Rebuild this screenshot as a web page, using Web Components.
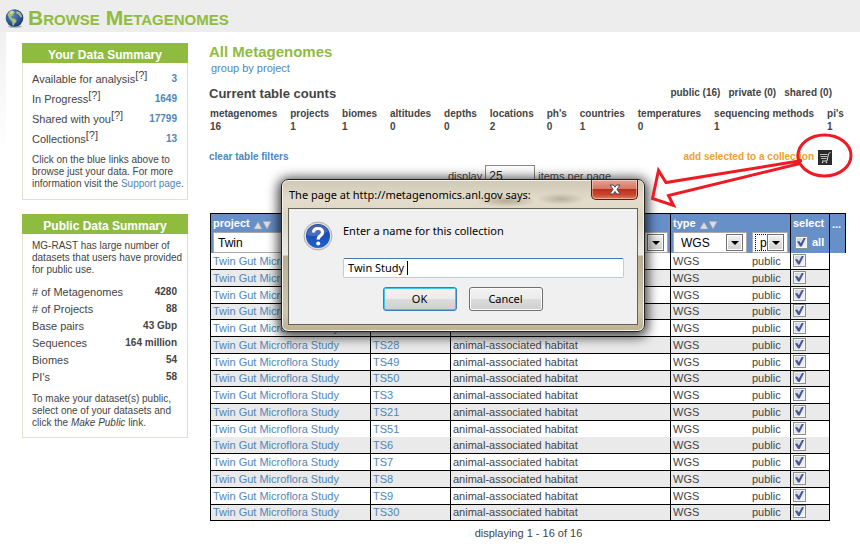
<!DOCTYPE html>
<html lang="en">
<head>
<meta charset="utf-8">
<title>Browse Metagenomes</title>
<style>
html { background: #fff; }
body { margin: 0; font: 11px/14px "Liberation Sans", Arial, sans-serif; color: #444; }
</style>
</head>
<body>
<metagenome-page></metagenome-page>
<script>
const define = (name, html, setup) => {
  const template = document.createElement('template');
  template.innerHTML = html;
  customElements.define(name, class extends HTMLElement {
    constructor() {
      super();
      this.attachShadow({ mode: 'open' }).append(template.content.cloneNode(true));
    }
    connectedCallback() { if (setup) setup(this, this.shadowRoot); }
  });
};

define('page-title', `
<style>
:host { display: flex; align-items: center; gap: 4px; height: 32px; padding: 4px 5px 0; box-sizing: border-box; background: #ededed; }
h1 { margin: 0; font-size: 21px; line-height: 26px; font-variant: small-caps; color: #8fbc3f; }
svg { flex: none; }
</style>
<svg width="19" height="19" viewBox="0 0 19 19" aria-hidden="true">
  <defs><radialGradient id="g" cx=".4" cy=".35" r=".7"><stop offset="0" stop-color="#5c86bd"/><stop offset=".6" stop-color="#2f5a9c"/><stop offset="1" stop-color="#1b3768"/></radialGradient></defs>
  <ellipse cx="10" cy="17.5" rx="7" ry="1.3" fill="#aaa"/>
  <circle cx="9.5" cy="9" r="8.800" fill="url(#g)"/>
  <path d="M2.500 6 4 3 6.500 1.500 9 2l1 1.500-1.500 1.500L7.500 7 6 7.800l1 1.400 2.500.3 2 1.700-.3 2-1.700 1.300-.8 2.300-1.200-.6-.4-3.200-1.600-2L4 8.700z" fill="#a9bf78"/>
  <path d="M11.500 2l3 1.200 2 2.600.6 2.700-1.800-.6-1.600-2.200-2.400-1.200z" fill="#a9bf78"/>
  <path d="M6 2.200 8.500 2 7.500 4 5 5z" fill="#dce5bd"/>
</svg>
<h1><slot></slot></h1>`);

define('summary-card', `
<style>
:host { display: block; }
h2 { margin: 0; height: 20px; font-size: 12px; line-height: 24px; text-align: center; color: #fff; background: #8fbc3f; overflow: hidden; }
.body { border: 1px solid #dfe2cf; border-top: 0; padding: 6px 10px 8px 9px; }
</style>
<h2><slot name="heading"></slot></h2>
<div class="body"><slot></slot></div>`);

define('summary-row', `
<style>
:host { display: flex; justify-content: space-between; align-items: center; height: var(--row-height, 17px); }
.value { font-weight: bold; font-size: 10px; }
a { color: #4f86b8; text-decoration: none; }
sup { font-size: 11px; line-height: 0; vertical-align: 4px; }
</style>
<span class="label"><span id="name"></span><sup id="hint"></sup></span><span class="value"></span>`,
(el, root) => {
  root.querySelector('#name').textContent = el.getAttribute('label');
  const value = root.querySelector('.value');
  if (el.hasAttribute('linked')) {
    root.querySelector('#hint').textContent = '[?]';
    const a = document.createElement('a');
    a.href = '#';
    a.textContent = el.getAttribute('value');
    value.replaceChildren(a);
  } else {
    root.querySelector('#hint').remove();
    value.textContent = el.getAttribute('value');
  }
});

define('count-strip', `
<style>
:host { display: block; }
dl { display: flex; justify-content: space-between; margin: 0; font-weight: bold; font-size: 10px; line-height: 13px; }
dd { margin: 0; }
</style><dl></dl>`,
(el, root) => {
  const counts = [['metagenomes', 16], ['projects', 1], ['biomes', 1], ['altitudes', 0], ['depths', 0], ['locations', 2], ["ph's", 0], ['countries', 1], ['temperatures', 0], ['sequencing methods', 1], ["pi's", 1]];
  root.querySelector('dl').innerHTML = counts.map(([k, v]) => `<div><dt>${k}</dt><dd>${v}</dd></div>`).join('');
});

define('sort-arrows', `
<style>:host { display: inline-block; vertical-align: -3px; } svg { display: block; }</style>
<svg width="19" height="10" viewBox="0 0 19 10" aria-hidden="true"><path d="M1 9 5 2l4 7z" fill="#ddd" stroke="#aaa" stroke-width=".6"/><path d="M10 1.500h8L14 9z" fill="#ddd" stroke="#aaa" stroke-width=".6"/></svg>`);

define('filter-select', `
<style>
:host { display: grid; height: 21px; }
select, .arrow { grid-area: 1 / 1; }
select { appearance: none; width: 100%; min-width: 0; height: 21px; margin: 0; padding: 0 20px 0 7px; border: 1px solid #aaa; border-radius: 0; background: #fff; color: #000; font: 12px "Liberation Sans", Arial, sans-serif; }
.arrow { justify-self: end; align-self: center; width: 15px; height: 15px; margin-right: 4px; border: 1px solid #707070; box-shadow: inset 0 0 0 1px #fff; background: linear-gradient(#f3f3f3, #cfcfcf); pointer-events: none; display: grid; place-items: center; }
.arrow::before { content: ""; border: 4px solid transparent; border-top-color: #000; border-bottom: 0; }
.ring { grid-area: 1 / 1; display: none; width: 11px; height: 15px; margin: 2px 0 0 3px; border: 1px dotted #000; pointer-events: none; }
:host([focused]) .ring { display: block; }
</style>
<select><option></option></select><span class="ring"></span><span class="arrow"></span>`,
(el, root) => {
  root.querySelector('option').textContent = el.getAttribute('value') || '';
  root.querySelector('select').setAttribute('aria-label', el.getAttribute('label'));
});

define('metagenome-table', `
<style>
:host { display: block; }
table { width: 100%; table-layout: fixed; border-collapse: separate; border-spacing: 0; border-top: 1px solid #000; line-height: 14px; }
th { box-sizing: border-box; height: 39px; padding: 3px 2px 0; text-align: left; vertical-align: top; color: #fff; background: #678fc8; border-left: 1px solid #000; }
th:last-child { border-right: 1px solid #000; }
th.join, td.join { border-left: 0; padding-left: 3px; }
.label { display: block; height: 15px; line-height: 13px; white-space: nowrap; }
.text { display: block; box-sizing: border-box; width: 100%; height: 21px; margin: 0; padding: 0 4px; border: 1px solid #aaa; background: #fff; font: 12px "Liberation Sans", Arial, sans-serif; color: #000; }
td { box-sizing: border-box; height: 17px; padding: 0 2px; border-left: 1px solid #000; border-bottom: 1px solid #000; white-space: nowrap; line-height: 15px; }
tr:nth-child(4n) td { height: 16px; }
tr:nth-child(11) td { border-bottom-color: #eaeaea; }
tr:nth-child(even) td { background: #eaeaea; }
tbody td.rest { background: none; border-bottom: 0; }
td a { color: #4f86b8; text-decoration: none; }
input[type=checkbox] { appearance: none; display: inline-block; box-sizing: border-box; width: 13px; height: 13px; margin: 0; border: 1px solid #8e8f8f; background: linear-gradient(135deg, #c8ccd2, #fafafa); box-shadow: inset 0 0 0 1px #f4f4f4; vertical-align: top; }
input[type=checkbox]:checked::before { content: ""; display: block; width: 9px; height: 9px; margin: 1px; background: #43579c; clip-path: polygon(0 44%, 25% 40%, 42% 64%, 78% 0, 100% 0, 52% 100%, 34% 100%); }
.all { display: flex; align-items: center; gap: 4px; padding: 3px 0 0 2px; }
</style>
<table>
<colgroup><col style="width:160px"><col style="width:80px"><col><col style="width:79px"><col style="width:41px"><col style="width:39px"><col style="width:17px"></colgroup>
<thead><tr>
<th><span class="label">project <sort-arrows></sort-arrows></span><input class="text" value="Twin" aria-label="project"></th>
<th><span class="label"></span><input class="text" aria-label="metagenome"></th>
<th><span class="label"></span><filter-select label="biome"></filter-select></th>
<th><span class="label">type <sort-arrows></sort-arrows></span><filter-select label="type" value="WGS"></filter-select></th>
<th class="join"><span class="label"></span><filter-select focused label="access" value="p"></filter-select></th>
<th><span class="label">select</span><label class="all"><input type="checkbox" checked>all</label></th>
<th>...</th>
</tr></thead><tbody></tbody>
</table>`,
(el, root) => {
  const names = ['', '', '', '', '', 'TS28', 'TS49', 'TS50', 'TS3', 'TS21', 'TS51', 'TS6', 'TS7', 'TS8', 'TS9', 'TS30'];
  root.querySelector('tbody').innerHTML = names.map((n, i) => `<tr><td><a href="#">Twin Gut Microflora Study</a></td><td>${n ? `<a href="#">${n}</a>` : ''}</td><td>${n ? 'animal-associated habitat' : ''}</td><td>WGS</td><td class="join">public</td><td><input type="checkbox" checked aria-label="select row ${i + 1}"></td><td class="rest"></td></tr>`).join('');
});

define('prompt-dialog', `
<style>
:host { display: block; box-sizing: border-box; width: 364px; border: 1px solid #222; border-radius: 7px; padding: 0 6px 6px; color: #000;
  font: 11px/16px "Noto Sans", sans-serif;
  background: radial-gradient(ellipse 30px 6px at 62% 21px, #b5ab93 0, transparent 100%), radial-gradient(ellipse 24px 6px at 77% 19px, #b9b09b 0, transparent 100%), linear-gradient(#cfc8b5, #e3dccb 20px, #dcd5c3 40px, #eceae4 75px, #b9ae94 76px, #cfc6b0 130px, #bdb193);
  box-shadow: inset 0 0 0 1px #f5f2ea, 0 2px 12px 3px rgba(0,0,0,.75); }
header { display: flex; justify-content: space-between; height: 28px; }
h2 { margin: 0; padding: 0 0 0 1px; font-size: 11px; font-weight: normal; line-height: 29px; }
.close { display: grid; place-items: center; width: 47px; height: 20px; padding: 0; border: 1px solid #5b1b14; border-top: 0; border-radius: 0 0 5px 5px; background: linear-gradient(#e7a394, #d67864 45%, #b8301c 50%, #cc4b2f 80%, #e08263); box-shadow: inset 0 0 0 1px rgba(255,255,255,.4); }
form { display: grid; grid-template-columns: 30px 1fr; column-gap: 10px; box-sizing: border-box; height: 117px; padding: 12px 14px; border: 1px solid #666255; background: #f0f0f0; }
label { padding-top: 2px; }
input { grid-column: 2; box-sizing: border-box; width: 281px; height: 20px; margin: 6px 0 9px; padding: 0 4px; border: 1px solid #b5cfe7; border-top-color: #3d7bad; border-radius: 2px; outline: 0; background: linear-gradient(#000, #000) 63px 2px / 1px 14px no-repeat #fff; color: #000; font: inherit; }
.buttons { grid-column: 1 / 3; display: flex; justify-content: center; gap: 12px; padding-right: 2px; }
.buttons button { width: 74px; height: 24px; padding: 0; border: 1px solid #707070; border-radius: 3px; background: linear-gradient(#f3f3f3, #ebebeb 50%, #dcdcdc 51%, #cfcfcf); box-shadow: inset 0 0 0 1px #fbfbfb; color: #000; font: inherit; }
.buttons .ok { border-color: #3c7fb1; box-shadow: inset 0 0 0 1px #3fc8ef; }
</style>
<header><h2>The page at http://metagenomics.anl.gov says:</h2>
<button class="close" aria-label="Close"><svg width="12" height="11" viewBox="0 0 12 11"><path d="M1 1h3.300L6 3.200 7.700 1H11L8 5.300 11.200 10H7.800L6 7.500 4.200 10H.8L4 5.300z" fill="#fff" stroke="#49484e"/></svg></button></header>
<form onsubmit="return false">
<svg width="30" height="30" viewBox="0 0 30 30" aria-hidden="true"><defs><linearGradient id="b" x2="0" y2="1"><stop stop-color="#153d92"/><stop offset=".5" stop-color="#1d4fb4"/><stop offset="1" stop-color="#1e62d2"/></linearGradient></defs><circle cx="15" cy="15" r="14" fill="#ddd" stroke="#b0b0b0"/><circle cx="15" cy="15" r="12" fill="url(#b)"/><path d="M4 14A11 11 0 0 1 25 10Q17 17 4 14z" fill="#fff" opacity=".2"/><path d="M10.500 11.500Q10.500 7.500 15 7.500T19.500 11.500Q19.500 13.600 17.300 14.800 15.200 16 15.200 18.500" fill="none" stroke="#fff" stroke-width="3.200"/><circle cx="15.200" cy="22.500" r="2" fill="#fff"/></svg>
<label for="name">Enter a name for this collection</label>
<input id="name" value="Twin Study">
<div class="buttons"><button class="ok">OK</button><button type="button">Cancel</button></div>
</form>`);

define('callout-arrow', `
<style>:host { display: block; pointer-events: none; } svg { display: block; }</style>
<svg width="210" height="80" viewBox="646 130 210 80" fill="none" stroke="#ed1c24" stroke-width="3" aria-hidden="true"><ellipse cx="824.500" cy="155.500" rx="26.500" ry="20.500"/><path d="M802 160.500 666 182.500 658.500 170.500 652.500 198.500 673.500 205.500 668.500 195.500 800 163.500"/></svg>`);

define('metagenome-page', `
<style>
:host { display: block; position: relative; background: linear-gradient(#ededed, #fff 150px); }
.sheet { display: grid; grid-template-columns: 166px 1fr; column-gap: 21px; margin-left: 6px; padding: 11px 14px 8px 16px; background: #fff; }
aside { display: flex; flex-direction: column; gap: 14px; }
p { margin: 0 -8px 0 0; font-size: 10px; line-height: 12px; }
a { color: #4f86b8; text-decoration: none; }
.mine { --row-height: 20px; }
.mine p { padding: 5px 0 1px; }
.first { padding-bottom: 7px; }
.last { padding: 8px 0 0; }
.all-h { margin: 0; font-size: 15px; line-height: 18px; color: #8fbc3f; }
.group { display: block; padding-left: 2px; line-height: 15px; }
.heads { display: flex; justify-content: space-between; align-items: flex-end; height: 25px; }
.cur { margin: 0; font-size: 13px; line-height: 15px; }
.access { display: flex; gap: 8px; padding-right: 14px; font-size: 10px; font-weight: bold; line-height: 16px; }
count-strip { margin: 6px 2px 0 1px; }
.tools { display: flex; justify-content: space-between; align-items: center; height: 16px; margin-top: 16px; padding-right: 14px; font-size: 10px; font-weight: bold; }
.add { display: flex; align-items: center; gap: 4px; color: #f0a030; }
.pager { display: flex; justify-content: center; align-items: center; gap: 3px; margin: 0 0 27px; padding-left: 4px; height: 21px; }
.pager input { box-sizing: border-box; width: 50px; height: 21px; padding: 0 3px; border: 1px solid #888; font: 12px "Liberation Sans", Arial, sans-serif; color: #222; }
metagenome-table { margin: 0 0 0 1px; }
.shown { padding: 5px 0 0 2px; text-align: center; }
prompt-dialog { position: absolute; left: 281px; top: 179px; }
callout-arrow { position: absolute; left: 646px; top: 130px; }
</style>
<page-title>Browse Metagenomes</page-title>
<div class="sheet">
<aside>
<summary-card class="mine"><span slot="heading">Your Data Summary</span>
<summary-row linked label="Available for analysis" value="3"></summary-row>
<summary-row linked label="In Progress" value="1649"></summary-row>
<summary-row linked label="Shared with you" value="17799"></summary-row>
<summary-row linked label="Collections" value="13"></summary-row>
<p>Click on the blue links above to browse just your data. For more information visit the <a href="#">Support page</a>.</p></summary-card>
<summary-card><span slot="heading">Public Data Summary</span>
<p class="first">MG-RAST has large number of datasets that users have provided for public use.</p>
<summary-row label="# of Metagenomes" value="4280"></summary-row>
<summary-row label="# of Projects" value="88"></summary-row>
<summary-row label="Base pairs" value="43 Gbp"></summary-row>
<summary-row label="Sequences" value="164 million"></summary-row>
<summary-row label="Biomes" value="54"></summary-row>
<summary-row label="PI's" value="58"></summary-row>
<p class="last">To make your dataset(s) public, select one of your datasets and click the <i>Make Public</i> link.</p></summary-card>
</aside>
<main>
<h2 class="all-h">All Metagenomes</h2>
<a class="group" href="#">group by project</a>
<div class="heads"><h3 class="cur">Current table counts</h3><div class="access"><span>public (16)</span><span>private (0)</span><span>shared (0)</span></div></div>
<count-strip></count-strip>
<div class="tools"><a href="#">clear table filters</a><a class="add" href="#">add selected to a collection <svg width="14" height="15" viewBox="0 0 14 15" aria-hidden="true"><path d="M0 0h14v15H0z" fill="#2b2b2b"/><path d="M12.500 2 10.500 4 9 11H4" fill="none" stroke="#ddd"/><path d="M2 4.500h7.500M2.500 6.500h6.500M3 8.500h5.500" fill="none" stroke="#bbb"/><circle cx="4.500" cy="12.500" r=".8" fill="#ddd"/><circle cx="8.500" cy="12.500" r=".8" fill="#ddd"/></svg></a></div>
<div class="pager"><label for="size">display</label><input id="size" value="25"><span>items per page</span></div>
<metagenome-table></metagenome-table>
<div class="shown">displaying 1 - 16 of 16</div>
</main>
</div>
<prompt-dialog></prompt-dialog>
<callout-arrow></callout-arrow>`);
</script>
</body>
</html>
